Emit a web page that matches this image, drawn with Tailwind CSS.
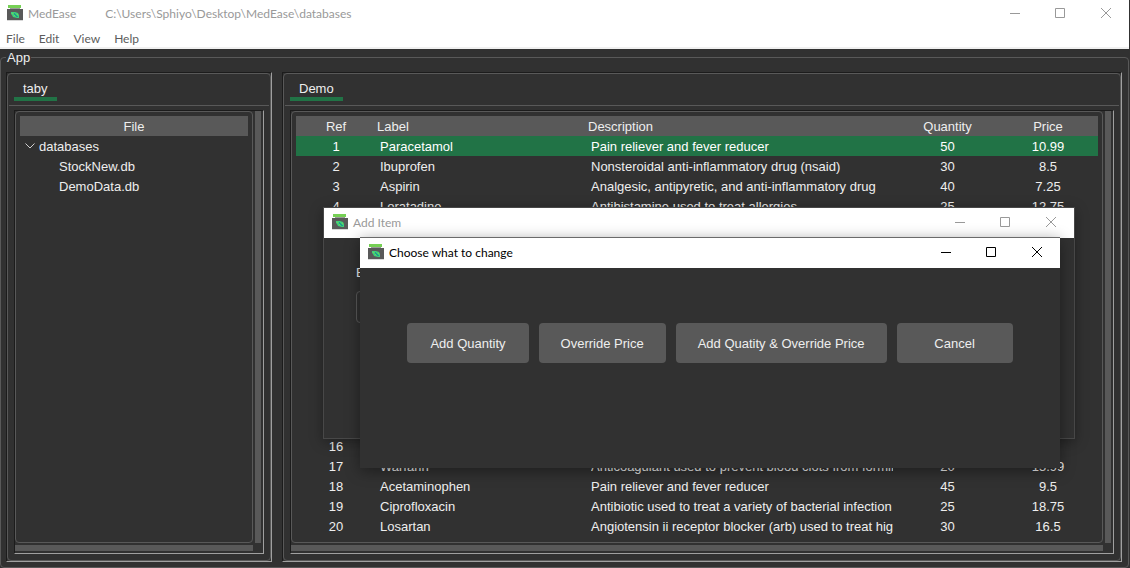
<!DOCTYPE html>
<html lang="en">
<head>
<meta charset="utf-8">
<title>MedEase</title>
<script src="https://cdn.jsdelivr.net/npm/@tailwindcss/browser@4"></script>
</head>
<body class="relative h-screen overflow-hidden bg-[#313131] font-['Liberation_Sans',sans-serif] text-[13px] leading-5 text-[#eeeeee]">

<svg class="hidden">
  <symbol id="jar" viewBox="0 0 16 16">
    <path fill="#76d055" d="M1 0h13v3H1z"/>
    <path fill="#9a9a9a" d="M3 3h10v1H3z"/>
    <path fill="#595959" d="M0 4h16v11H0z"/>
    <path fill="#d8d8d8" d="M0 15h16v1H0z"/>
    <path fill="#3fd07a" d="M4 7h4l3 1 1 2v3h-2l-4-1-1-2-1-1z"/>
    <path fill="#1fa08c" d="M7 8h1v1h1v1h1v1h1v1h-2v-1H8v-1H7z"/>
    <path fill="#76d055" d="M5 8h1v1H5zM7 10h1v1H7zM10 9h1v1h-1z"/>
  </symbol>
  <symbol id="min" viewBox="0 0 10 10"><path stroke="currentColor" d="M0 5.5h10"/></symbol>
  <symbol id="max" viewBox="0 0 10 10"><path fill="none" stroke="currentColor" d="M.5 .5h9v9h-9z"/></symbol>
  <symbol id="close" viewBox="0 0 10 10"><path stroke="currentColor" d="M0 0l10 10M10 0L0 10"/></symbol>
</svg>

<div class="flex h-full flex-col">
  <header class="mr-px border-b-2 border-[#f0f0f0] bg-white font-['Lato','Open_Sans',sans-serif] text-[12px]">
    <div class="flex h-[30px] items-center pl-[7px] text-[#999999]">
      <svg class="mt-[-4px] size-4"><use href="#jar"/></svg>
      <span class="ml-[5px] mt-[-2px]">MedEase</span>
      <span class="ml-[29px] mt-[-2px]">C:\Users\Sphiyo\Desktop\MedEase\databases</span>
      <div class="ml-auto mt-[-4px] flex">
        <button aria-label="Minimize" class="flex w-[44px] justify-center"><svg class="size-[10px]"><use href="#min"/></svg></button>
        <button aria-label="Maximize" class="flex w-[46px] justify-center"><svg class="size-[10px]"><use href="#max"/></svg></button>
        <button aria-label="Close" class="flex w-[46px] justify-center"><svg class="size-[10px]"><use href="#close"/></svg></button>
      </div>
    </div>
    <nav class="flex h-[17px] items-center gap-[14px] pl-[6px] text-[#5c5c5c]">
      <button>File</button><button>Edit</button><button>View</button><button>Help</button>
    </nav>
  </header>

  <fieldset class="mr-px flex min-h-0 min-w-0 flex-1 flex-col rounded-[4px] border border-[#595959] pb-[5px] pl-[5px] pr-[6px]">
    <legend class="h-[17px] px-px leading-[17px]">App</legend>
    <div class="mt-[6px] flex min-h-0 flex-1 gap-[10px]">

      <section class="flex w-[266px] shrink-0 border border-t-[#1c1c1c] border-l-[#1c1c1c] border-r-[#a0a0a0] border-b-[#a0a0a0]">
        <div class="flex min-w-0 flex-1 flex-col rounded-[4px] border border-[#595959]">
          <div class="mx-px flex h-8 border-b border-[#595959] px-[5px]">
            <button class="mb-1 mt-[3px] border-b-4 border-[#217346] px-[9px] pt-[2px]">taby</button>
          </div>
          <div class="mx-[6px] mb-[6px] mt-1 flex min-h-0 flex-1 flex-col border border-t-[#1c1c1c] border-l-[#1c1c1c] border-r-[#a0a0a0] border-b-[#a0a0a0]">
            <div class="flex min-h-0 flex-1">
              <div class="min-w-0 flex-1 overflow-hidden rounded-[4px] border border-[#595959] p-1 leading-[18px]">
                <div class="h-5 bg-[#595959] pt-[2px] text-center">File</div>
                <ul>
                  <li>
                    <div class="flex h-5 items-center gap-1 pl-[5px]">
                      <svg class="h-[6px] w-[10px]" viewBox="0 0 10 6"><path fill="none" stroke="#d0d0d0" d="M.5 .5L5 5L9.500 .5"/></svg>
                      <span class="pt-[2px]">databases</span>
                    </div>
                    <ul class="pl-[39px]"><li class="h-5 pt-[2px]">StockNew.db</li><li class="h-5 pt-[2px]">DemoData.db</li></ul>
                  </li>
                </ul>
              </div>
              <div class="ml-[2px] mr-[2px] w-[6px] bg-[#595959]"></div>
            </div>
            <div class="mb-[2px] mr-[10px] mt-[2px] h-[6px] bg-[#595959]"></div>
          </div>
        </div>
      </section>

      <section class="flex min-w-0 flex-1 border border-t-[#1c1c1c] border-l-[#1c1c1c] border-r-[#a0a0a0] border-b-[#a0a0a0]">
        <div class="flex min-w-0 flex-1 flex-col rounded-[4px] border border-[#595959]">
          <div class="mx-px flex h-8 border-b border-[#595959] px-[5px]">
            <button class="mb-1 mt-[3px] border-b-4 border-[#217346] px-[9px] pt-[2px]">Demo</button>
          </div>
          <div class="mx-[6px] mb-[6px] mt-1 flex min-h-0 flex-1 flex-col border border-t-[#1c1c1c] border-l-[#1c1c1c] border-r-[#a0a0a0] border-b-[#a0a0a0]">
            <div class="flex min-h-0 flex-1">
              <div class="min-w-0 flex-1 overflow-hidden rounded-[4px] border border-[#595959] p-1">
                <table class="w-full table-fixed whitespace-nowrap leading-[18px] [&_td]:h-5 [&_td]:overflow-hidden [&_td]:p-0 [&_td]:pt-[2px] [&_td:nth-child(2)]:pl-1 [&_td:nth-child(3)]:pl-1 [&_td:nth-child(n+4)]:text-center [&_td:first-child]:text-center [&_th]:h-5 [&_th]:p-0 [&_th]:pt-[2px] [&_th]:font-normal">
                  <colgroup><col class="w-[80px]"><col class="w-[211px]"><col><col class="w-[101px]"><col class="w-[100px]"></colgroup>
                  <thead><tr class="bg-[#595959]"><th>Ref</th><th class="text-left"><span class="pl-px">Label</span></th><th class="text-left"><span class="pl-px">Description</span></th><th>Quantity</th><th>Price</th></tr></thead>
                  <tbody>
                    <tr class="bg-[#217346] text-white"><td>1</td><td>Paracetamol</td><td>Pain reliever and fever reducer</td><td>50</td><td>10.99</td></tr>
                    <tr><td>2</td><td>Ibuprofen</td><td>Nonsteroidal anti-inflammatory drug (nsaid)</td><td>30</td><td>8.5</td></tr>
                    <tr><td>3</td><td>Aspirin</td><td>Analgesic, antipyretic, and anti-inflammatory drug</td><td>40</td><td>7.25</td></tr>
                    <tr><td>4</td><td>Loratadine</td><td>Antihistamine used to treat allergies</td><td>25</td><td>12.75</td></tr>
                    <tr><td colspan="5" class="h-[220px]!"></td></tr>
                    <tr><td>16</td><td></td><td></td><td></td><td></td></tr>
                    <tr><td>17</td><td>Warfarin</td><td><div class="w-[302px] overflow-hidden">Anticoagulant used to prevent blood clots from formin</div></td><td>20</td><td>15.99</td></tr>
                    <tr><td>18</td><td>Acetaminophen</td><td>Pain reliever and fever reducer</td><td>45</td><td>9.5</td></tr>
                    <tr><td>19</td><td>Ciprofloxacin</td><td>Antibiotic used to treat a variety of bacterial infection</td><td>25</td><td>18.75</td></tr>
                    <tr><td>20</td><td>Losartan</td><td>Angiotensin ii receptor blocker (arb) used to treat hig</td><td>30</td><td>16.5</td></tr>
                  </tbody>
                </table>
              </div>
              <div class="ml-[2px] mr-[2px] w-[6px] bg-[#595959]"></div>
            </div>
            <div class="mb-[2px] mr-[10px] mt-[2px] h-[6px] bg-[#595959]"></div>
          </div>
        </div>
      </section>
    </div>
  </fieldset>
</div>

<!-- Add Item window -->
<div role="dialog" aria-label="Add Item" class="absolute left-[323px] top-[207px] flex h-[232px] w-[752px] flex-col border border-[#484848] bg-[#313131] shadow-[0_3px_12px_rgba(0,0,0,0.35)]">
  <div class="flex h-[30px] shrink-0 items-center bg-white pl-2 font-['Lato','Open_Sans',sans-serif] text-[12px] text-[#999999]">
    <svg class="mt-[-2px] size-4"><use href="#jar"/></svg>
    <span class="ml-[5px]">Add Item</span>
    <div class="ml-auto mt-[-2px] flex">
      <button aria-label="Minimize" class="flex w-[44px] justify-center"><svg class="size-[10px]"><use href="#min"/></svg></button>
      <button aria-label="Maximize" class="flex w-[46px] justify-center"><svg class="size-[10px]"><use href="#max"/></svg></button>
      <button aria-label="Close" class="flex w-[46px] justify-center"><svg class="size-[10px]"><use href="#close"/></svg></button>
    </div>
  </div>
  <div class="px-8 pt-[25px]">
    <label for="item" class="block">E</label>
    <input id="item" class="mt-2 h-8 w-full rounded-[4px] border border-[#595959]">
  </div>
</div>

<!-- Choose what to change window -->
<div role="dialog" aria-label="Choose what to change" class="absolute left-[360px] top-[237px] w-[700px] border-t border-[#6a6a6a] bg-[#313131] shadow-[0_3px_14px_rgba(0,0,0,0.4)]">
  <div class="flex h-[30px] items-center bg-white pl-2 font-['Lato','Open_Sans',sans-serif] text-[12px] text-black">
    <svg class="mt-[-2px] size-4"><use href="#jar"/></svg>
    <span class="ml-[5px]">Choose what to change</span>
    <div class="ml-auto mt-[-2px] flex">
      <button aria-label="Minimize" class="flex w-[44px] justify-center"><svg class="size-[10px]"><use href="#min"/></svg></button>
      <button aria-label="Maximize" class="flex w-[46px] justify-center"><svg class="size-[10px]"><use href="#max"/></svg></button>
      <button aria-label="Close" class="flex w-[46px] justify-center"><svg class="size-[10px]"><use href="#close"/></svg></button>
    </div>
  </div>
  <div class="flex h-[200px] justify-center gap-[10px] pt-[55px]">
    <button class="h-10 rounded-[4px] bg-[#595959] px-[23px] pt-[2px]">Add Quantity</button>
    <button class="h-10 rounded-[4px] bg-[#595959] px-[22px] pt-[2px]">Override Price</button>
    <button class="h-10 rounded-[4px] bg-[#595959] px-[22px] pt-[2px]">Add Quatity &amp; Override Price</button>
    <button class="h-10 w-[116px] rounded-[4px] bg-[#595959] pt-[2px]">Cancel</button>
  </div>
</div>
</body>
</html>
